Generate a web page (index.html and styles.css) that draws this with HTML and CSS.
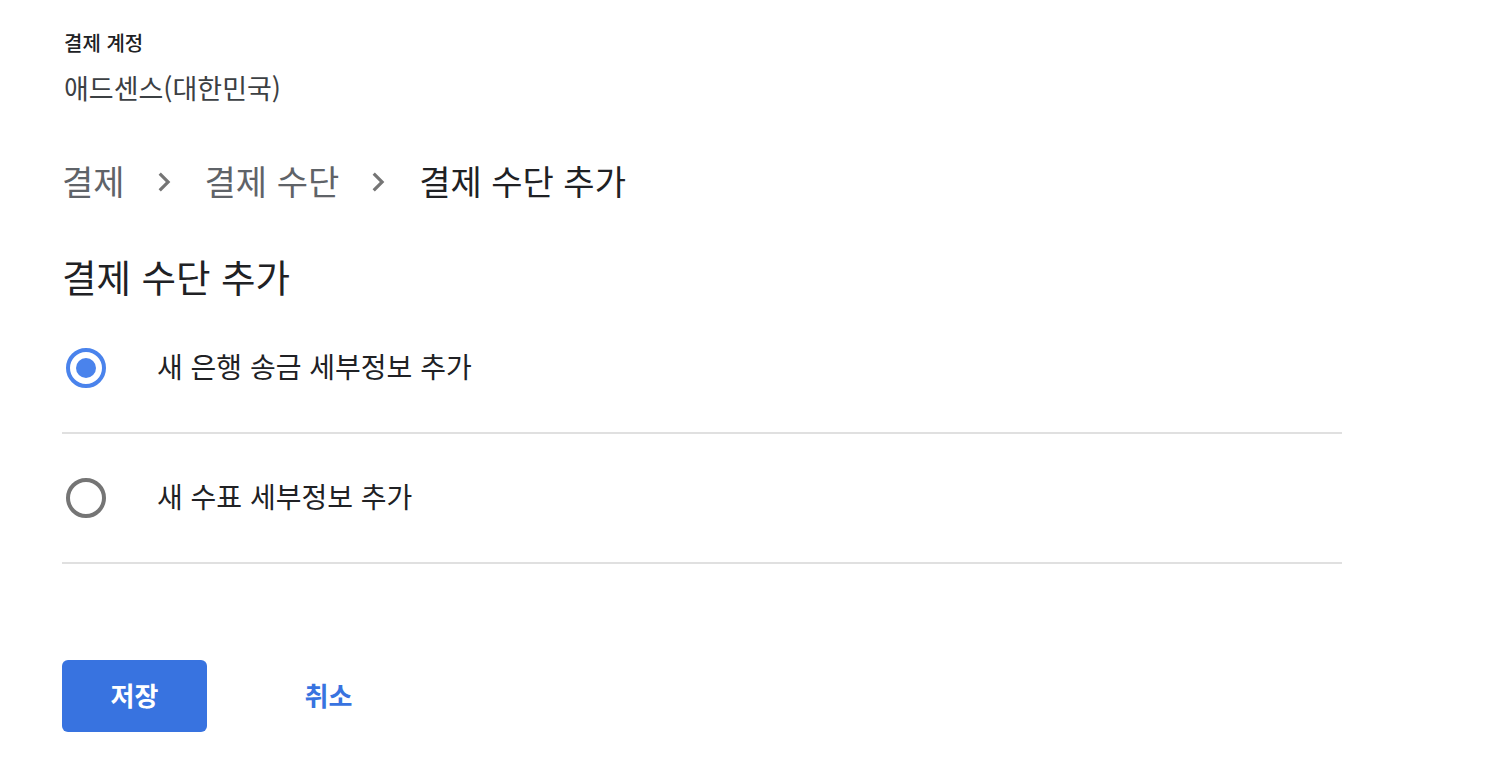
FILE: index.html
```html
<!DOCTYPE html>
<html lang="ko">
<head>
<meta charset="utf-8">
<title>결제 수단 추가</title>
<link rel="stylesheet" href="styles.css">
</head>
<body>
<main class="page">
  <section class="account">
    <div class="account-label">결제 계정</div>
    <div class="account-value">애드센스(대한민국)</div>
  </section>

  <nav class="crumbs">
    <span class="crumb">결제</span>
    <svg class="chev" viewBox="0 0 24 24" width="38" height="38"><path d="M10 6L8.59 7.41 13.17 12l-4.58 4.59L10 18l6-6z" fill="currentColor"/></svg>
    <span class="crumb">결제 수단</span>
    <svg class="chev" viewBox="0 0 24 24" width="38" height="38"><path d="M10 6L8.59 7.41 13.17 12l-4.58 4.59L10 18l6-6z" fill="currentColor"/></svg>
    <span class="crumb current">결제 수단 추가</span>
  </nav>

  <h1 class="title">결제 수단 추가</h1>

  <div class="options">
    <div class="option">
      <span class="radio checked"><span class="dot"></span></span>
      <span class="option-label">새 은행 송금 세부정보 추가</span>
    </div>
    <div class="option">
      <span class="radio"></span>
      <span class="option-label">새 수표 세부정보 추가</span>
    </div>
  </div>

  <div class="actions">
    <button class="btn primary">저장</button>
    <button class="btn text">취소</button>
  </div>
</main>
</body>
</html>
```

FILE: styles.css
```css
html, body {
  margin: 0;
  padding: 0;
  background: #ffffff;
}

body {
  font-family: "Noto Sans CJK KR", "Noto Sans", sans-serif;
  color: #202124;
}

.page {
  padding: 31px 0 0 62px;
  width: 1280px;
}

.account {
  padding-left: 2px;
}

.account-label {
  font-size: 20px;
  line-height: 24px;
  font-weight: 500;
  color: #202124;
}

.account-value {
  margin-top: 17px;
  font-size: 27px;
  line-height: 32px;
  color: #3c4043;
}

.crumbs {
  margin-top: 57px;
  display: flex;
  align-items: center;
  height: 40px;
}

.crumb {
  font-size: 34px;
  line-height: 40px;
  color: #5f6368;
}

.crumb.current {
  color: #202124;
}

.chev {
  color: #757575;
  margin: 0 22px 0 20px;
  flex: none;
  position: relative;
  top: 1px;
}

.title {
  margin: 53px 0 0;
  font-size: 37.5px;
  line-height: 44px;
  font-weight: 400;
  color: #202124;
}

.options {
  margin-top: 6px;
}

.option {
  height: 128px;
  display: flex;
  align-items: center;
  border-bottom: 2px solid #e0e0e0;
}

.radio {
  box-sizing: border-box;
  width: 40px;
  height: 40px;
  margin-left: 4px;
  border: 4px solid #757575;
  border-radius: 50%;
  display: flex;
  align-items: center;
  justify-content: center;
  flex: none;
}

.radio.checked {
  border-color: #4a83ec;
}

.dot {
  width: 20px;
  height: 20px;
  border-radius: 50%;
  background: #4a83ec;
}

.option-label {
  margin-left: 51px;
  padding-bottom: 4px;
  font-size: 28px;
  line-height: 36px;
  color: #202124;
}

.actions {
  margin-top: 96px;
  display: flex;
  gap: 49px;
}

.btn {
  width: 145px;
  height: 72px;
  border: none;
  border-radius: 6px;
  font-family: "Noto Sans CJK KR", "Noto Sans", sans-serif;
  font-size: 26px;
  font-weight: 700;
  padding: 0 0 3px;
  cursor: pointer;
}

.btn.primary {
  background: #3873e0;
  color: #ffffff;
}

.btn.text {
  background: transparent;
  color: #3873e0;
}
```
